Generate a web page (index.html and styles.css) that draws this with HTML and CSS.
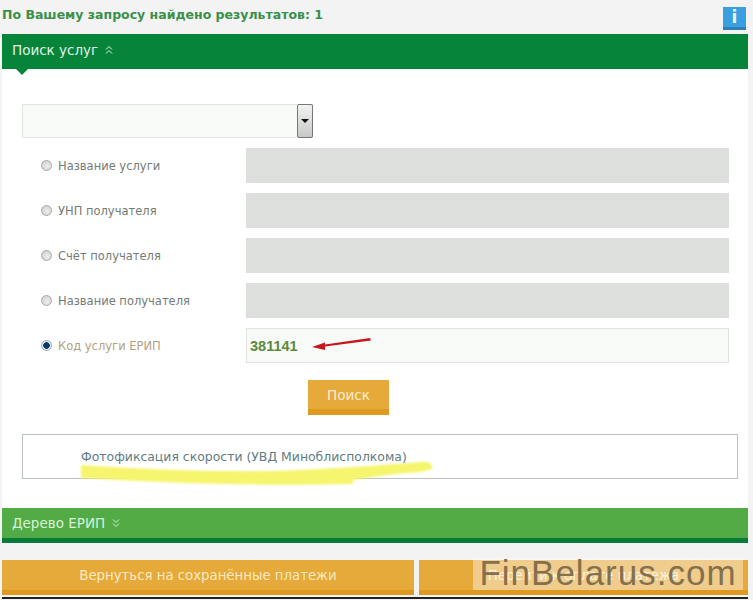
FILE: index.html
```html
<!DOCTYPE html>
<html lang="ru">
  <head>
    <meta charset="utf-8" />
    <meta name="viewport" content="width=device-width" />
    <title>Поиск услуг</title>
    <link rel="stylesheet" href="styles.css">
  </head>
  <body>
    <main class="page">
      <div class="result-bar">
        <span class="result-count">По Вашему запросу найдено результатов: 1</span>
        <span class="info-btn">i</span>
      </div>

      <section class="panel">
        <div class="panel-head panel-head-dark">
          Поиск услуг
          <svg class="chevrons" width="8" height="10" viewBox="0 0 8 10">
            <path d="M1 4.5 L4 1.5 L7 4.5 M1 8.5 L4 5.5 L7 8.5" />
          </svg>
        </div>
        <div class="panel-body">
          <div class="select">
            <span class="select-btn"></span>
          </div>

          <div class="row">
            <label class="row-label"><span class="radio"></span>Название услуги</label>
            <div class="field"></div>
          </div>
          <div class="row">
            <label class="row-label"><span class="radio"></span>УНП получателя</label>
            <div class="field"></div>
          </div>
          <div class="row">
            <label class="row-label"><span class="radio"></span>Счёт получателя</label>
            <div class="field"></div>
          </div>
          <div class="row">
            <label class="row-label"><span class="radio"></span>Название получателя</label>
            <div class="field"></div>
          </div>
          <div class="row">
            <label class="row-label row-label-active"><span class="radio radio-on"></span>Код услуги ЕРИП</label>
            <div class="field field-active">
              381141
              <svg class="arrow" width="64" height="14" viewBox="0 0 64 14">
                <path d="M61 1 L62 3.5 L16 9.5 L16 13 L3 10 L16 5.5 L16 7.5 Z" />
              </svg>
            </div>
          </div>

          <div class="search-wrap">
            <button class="btn-search">Поиск</button>
          </div>

          <div class="found">
            <svg class="marker" width="356" height="30" viewBox="0 0 356 30">
              <path d="M0 5 C60 9 130 12 190 11 C250 9 300 5 340 2 C350 1 352 6 351 9 L340 12 C310 14 290 17 272 20 L272 24 C200 26 100 24 0 18 Z" />
            </svg>
            <span class="found-text">Фотофиксация скорости (УВД Миноблисполкома)</span>
          </div>
        </div>
        <div class="panel-head panel-head-light">
          Дерево ЕРИП
          <svg class="chevrons" width="8" height="10" viewBox="0 0 8 10">
            <path d="M1 1.5 L4 4.5 L7 1.5 M1 5.5 L4 8.5 L7 5.5" />
          </svg>
        </div>
      </section>

      <div class="actions">
        <button class="btn-action btn-back">Вернуться на сохранённые платежи</button>
        <button class="btn-action btn-next">Перейти к оплате платежа</button>
      </div>
      <div class="footer-line"></div>

      <div class="watermark">FinBelarus.com</div>
    </main>
  </body>
</html>
```

FILE: styles.css
```css
html,
body {
  margin: 0;
  height: 600px;
  overflow: hidden;
  background: #f3f3f3;
}

.page {
  position: relative;
  height: 600px;
  padding-left: 2px;
  font-family: "DejaVu Sans", Verdana, sans-serif;
}

.result-bar {
  display: flex;
  justify-content: space-between;
  align-items: flex-start;
  width: 744px;
  height: 34px;
}

.result-count {
  margin-top: 8px;
  font-size: 12.5px;
  line-height: 14px;
  font-weight: bold;
  color: #3a9048;
  white-space: nowrap;
}

.info-btn {
  width: 23px;
  height: 23px;
  margin-top: 7px;
  box-sizing: border-box;
  border-bottom: 3px solid #2c7fb8;
  background: #3a9fe0;
  color: #e8f6ff;
  font-size: 17px;
  font-weight: bold;
  line-height: 20px;
  text-align: center;
}

.panel {
  width: 746px;
  background: #fff;
}

.panel-head {
  display: flex;
  align-items: center;
  gap: 7px;
  box-sizing: border-box;
  height: 35px;
  padding-left: 10px;
  font-size: 13.5px;
  color: #d8f2dc;
}

.panel-head-dark {
  position: relative;
  padding-bottom: 3px;
  background: #05843a;
  color: #e2f5e6;
}

/* little notch under the header */
.panel-head-dark::after {
  content: "";
  position: absolute;
  left: 14px;
  top: 35px;
  border-left: 6px solid transparent;
  border-right: 6px solid transparent;
  border-top: 6px solid #05843a;
}

.panel-head-light {
  border-bottom: 5px solid #07793a;
  background: #52ab44;
}

.chevrons {
  fill: none;
  stroke: currentColor;
  stroke-width: 1;
}

.panel-body {
  height: 439px;
  box-sizing: border-box;
  padding: 35px 10px 0 20px;
}

.select {
  display: flex;
  justify-content: flex-end;
  width: 291px;
  height: 34px;
  margin-bottom: 10px;
  box-sizing: border-box;
  border: 1px solid #e2e4e2;
  background: #f8faf8;
}

.select-btn {
  position: relative;
  width: 16px;
  margin: -1px -1px -1px 0;
  box-sizing: border-box;
  border: 1px solid #777;
  border-radius: 2px;
  background: linear-gradient(#f2f2f2, #c8c8c8);
}

.select-btn::after {
  content: "";
  position: absolute;
  left: 3px;
  top: 14px;
  border-left: 4px solid transparent;
  border-right: 4px solid transparent;
  border-top: 4px solid #111;
}

.row {
  display: flex;
  align-items: center;
  height: 35px;
  margin-bottom: 10px;
}

.row-label {
  display: flex;
  align-items: center;
  gap: 6px;
  width: 224px;
  box-sizing: border-box;
  padding-left: 19px;
  font-size: 11.5px;
  color: #727b76;
}

.row-label-active {
  color: #b3a17f;
}

.radio {
  width: 11px;
  height: 11px;
  box-sizing: border-box;
  border: 1px solid #a9a9a9;
  border-radius: 50%;
  background: radial-gradient(circle at 60% 60%, #eee, #c9c9c9);
}

.radio-on {
  border-color: #8fb0cc;
  background: radial-gradient(circle, #123a5c 0, #123a5c 3px, #dbe9f4 3.5px);
}

.field {
  position: relative;
  display: flex;
  align-items: center;
  width: 483px;
  height: 35px;
  box-sizing: border-box;
  background: #dcdfdc;
}

.field-active {
  padding-left: 3px;
  border: 1px solid #e0e3e0;
  background: #f8faf8;
  font-family: "Liberation Sans", Arial, sans-serif;
  font-size: 14.5px;
  font-weight: bold;
  color: #5c8a3c;
}

.arrow {
  position: absolute;
  left: 62px;
  top: 8px;
  fill: #c8161d;
}

.search-wrap {
  display: flex;
  justify-content: flex-start;
  padding-left: 286px;
  margin-top: 17px;
}

.btn-search {
  width: 81px;
  height: 35px;
  padding: 0;
  border: 0;
  border-bottom: 6px solid #dd9a1e;
  background: #e5aa3a;
  font-family: inherit;
  font-size: 13.5px;
  color: #fbeed0;
}

.found {
  position: relative;
  height: 45px;
  margin-top: 19px;
  width: 716px;
  box-sizing: border-box;
  border: 1px solid #b9c0c0;
  padding: 15px 0 0 58px;
  font-size: 12.45px;
  line-height: 14px;
  color: #607d82;
}

.found-text {
  position: relative;
  white-space: nowrap;
}

.marker {
  position: absolute;
  left: 58px;
  top: 25px;
  fill: #f6f56e;
  filter: blur(1px);
}

.actions {
  display: flex;
  gap: 5px;
  width: 746px;
  margin-top: 17px;
}

.btn-action {
  height: 35px;
  padding: 0;
  border: 0;
  border-bottom: 5px solid #dd9a1e;
  background: #e5aa3a;
  font-family: inherit;
  font-size: 13.3px;
  color: #fbe9c4;
}

.btn-back {
  width: 412px;
}

.btn-next {
  width: 329px;
}

.footer-line {
  width: 746px;
  height: 2px;
  margin-top: 2px;
  background: #222;
}

/* site stamp laid over the bottom right corner */
.watermark {
  position: absolute;
  left: 473px;
  top: 558px;
  width: 270px;
  height: 32px;
  background: rgba(255, 255, 255, 0.42);
  font-family: "Liberation Sans", Arial, sans-serif;
  font-size: 35px;
  letter-spacing: 1px;
  line-height: 29px;
  text-align: center;
  color: #85704e;
  white-space: nowrap;
}
```
